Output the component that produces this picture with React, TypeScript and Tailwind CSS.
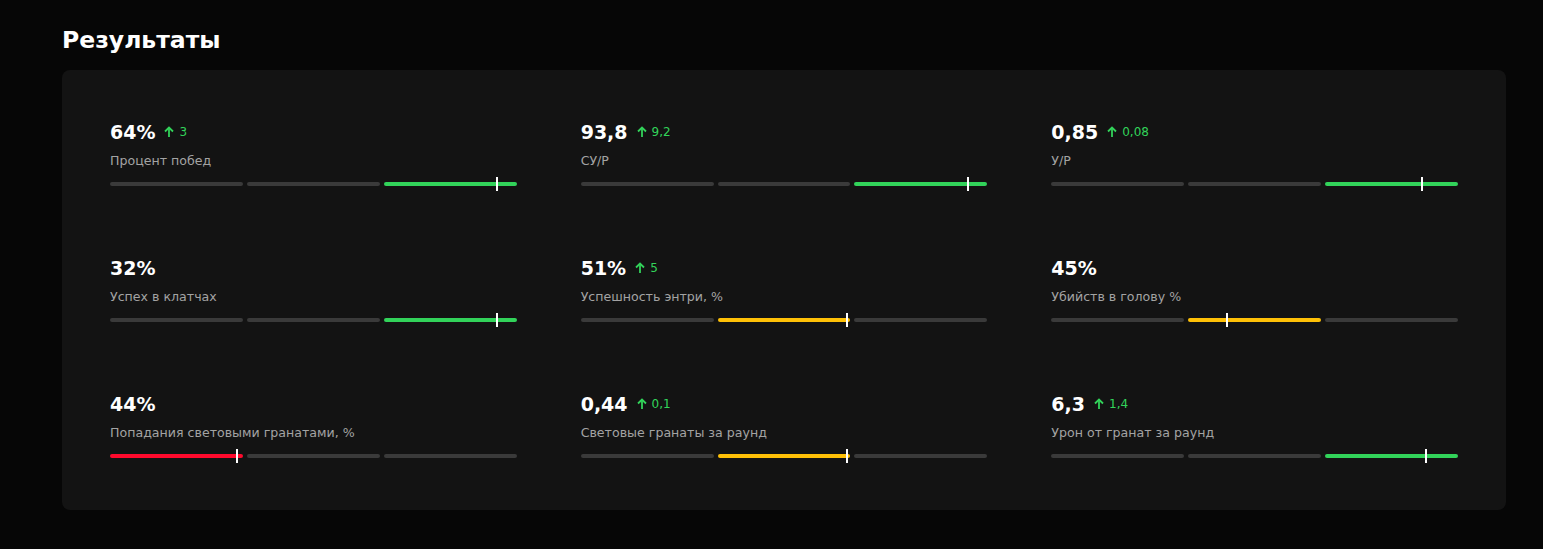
import React from "react";

type Stat = {
  value: string;
  delta?: string;
  label: string;
  segment: number; // which of the 3 segments is filled
  color: string;
  marker: number; // px offset from bar start
};

const stats: Stat[] = [
  { value: "64%", delta: "3", label: "Процент побед", segment: 2, color: "bg-[#32d35a]", marker: 386 },
  { value: "93,8", delta: "9,2", label: "СУ/Р", segment: 2, color: "bg-[#32d35a]", marker: 386 },
  { value: "0,85", delta: "0,08", label: "У/Р", segment: 2, color: "bg-[#32d35a]", marker: 370 },
  { value: "32%", label: "Успех в клатчах", segment: 2, color: "bg-[#32d35a]", marker: 386 },
  { value: "51%", delta: "5", label: "Успешность энтри, %", segment: 1, color: "bg-[#ffc107]", marker: 265 },
  { value: "45%", label: "Убийств в голову %", segment: 1, color: "bg-[#ffc107]", marker: 175 },
  { value: "44%", label: "Попадания световыми гранатами, %", segment: 0, color: "bg-[#ff0a2d]", marker: 126 },
  { value: "0,44", delta: "0,1", label: "Световые гранаты за раунд", segment: 1, color: "bg-[#ffc107]", marker: 265 },
  { value: "6,3", delta: "1,4", label: "Урон от гранат за раунд", segment: 2, color: "bg-[#32d35a]", marker: 374 },
];

function ArrowUp() {
  return (
    <svg width="12" height="12" viewBox="0 0 12 12" fill="none">
      <path d="M6 11V1.5" stroke="#32d35a" strokeWidth="1.8" />
      <path d="M2 5.5L6 1.5L10 5.5" stroke="#32d35a" strokeWidth="1.8" />
    </svg>
  );
}

function StatBlock({ s }: { s: Stat }) {
  return (
    <div className="flex flex-col">
      <div className="flex items-center gap-2 h-6">
        <span className="text-[19px] font-bold text-white leading-6">{s.value}</span>
        {s.delta && (
          <span className="flex items-center gap-1 text-[12px] text-[#32d35a] leading-none">
            <ArrowUp />
            {s.delta}
          </span>
        )}
      </div>
      <div className="mt-[7px] text-[12.6px] text-[#a3a3a3] leading-5">{s.label}</div>
      <div className="relative mt-[11px] flex gap-1 h-1">
        {[0, 1, 2].map((i) => (
          <div
            key={i}
            className={`flex-1 rounded-full ${i === s.segment ? s.color : "bg-[#3a3a3a]"}`}
          />
        ))}
        <div
          className="absolute top-[-5px] h-[14px] w-[2px] bg-white"
          style={{ left: `${s.marker}px` }}
        />
      </div>
    </div>
  );
}

export default function App() {
  return (
    <div
      className="min-h-[549px] bg-[#060606] pl-[62px] pr-[37px] pt-6 pb-10"
      style={{ fontFamily: "'DejaVu Sans', 'Noto Sans', sans-serif" }}
    >
      <h1 className="text-[23.5px] font-bold text-white leading-8">Результаты</h1>
      <div className="mt-[14px] rounded-lg bg-[#131313] px-12 pt-[50px] pb-[52px]">
        <div className="grid grid-cols-3 gap-x-16 gap-y-[70px]">
          {stats.map((s, i) => (
            <StatBlock key={i} s={s} />
          ))}
        </div>
      </div>
    </div>
  );
}
